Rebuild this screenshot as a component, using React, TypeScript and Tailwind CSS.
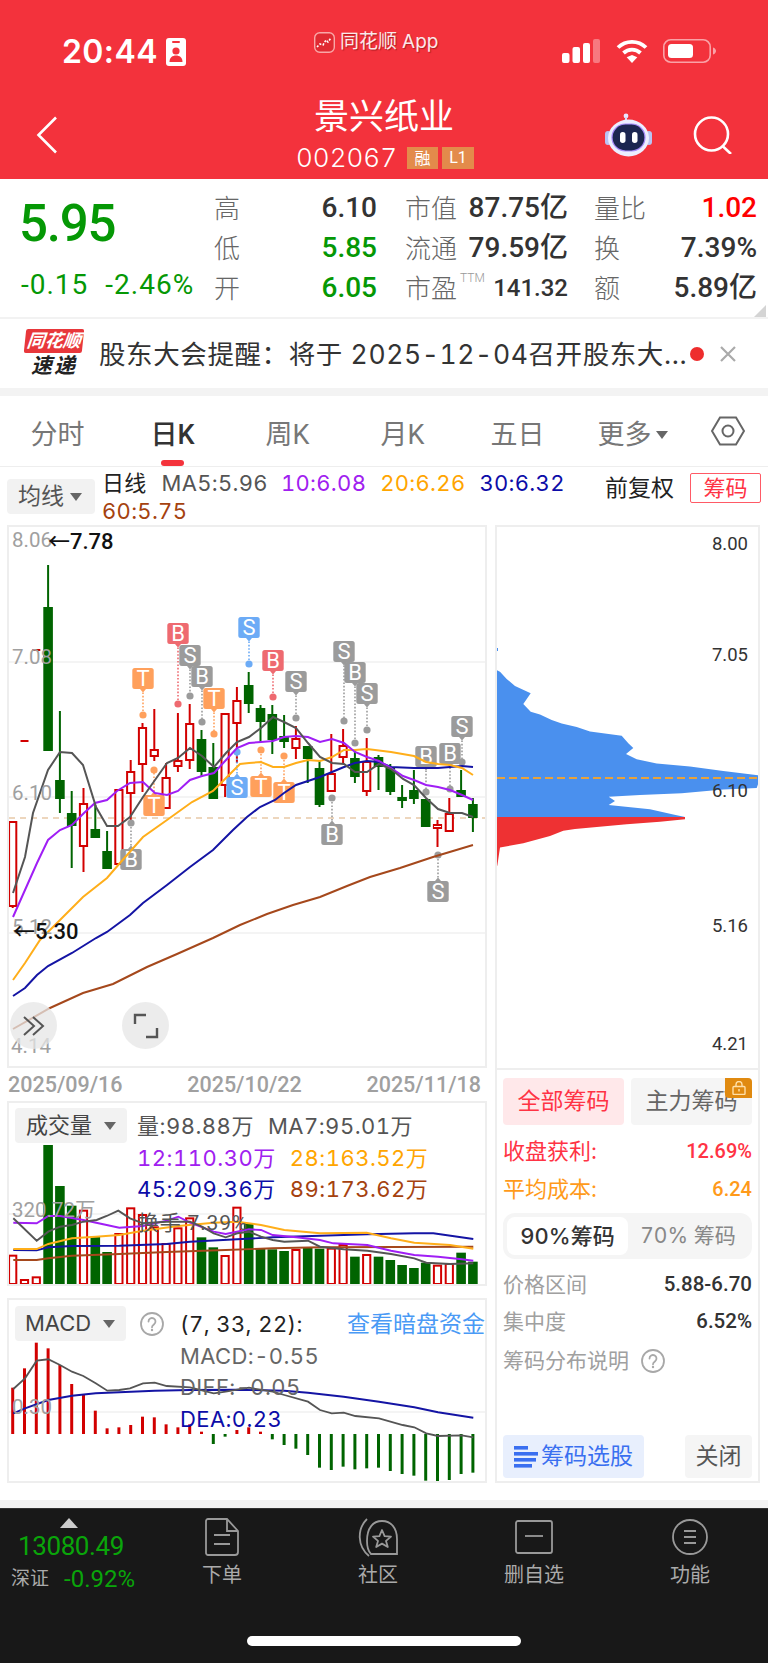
import React from "react";

const NUM = "font-['Roboto','Noto_Sans_CJK_SC',sans-serif]";
const CJK = "font-['Inter','Noto_Sans_CJK_SC',sans-serif] tabular-nums";
const CHART_FONT = "Roboto, 'Noto Sans CJK SC', 'DejaVu Sans', sans-serif";

const RED = "#d20000";
const GREEN = "#006400";

// Daily candles: [high, bodyTop, bodyBottom, low, rising]
type Candle = [number, number, number, number, boolean];
const candles: Candle[] = [
  [822, 822, 906, 908, true],
  [741, 741, 741, 741, true],
  [650, 650, 650, 650, true],
  [565, 607, 751, 751, false],
  [711, 780, 799, 813, false],
  [791, 813, 826, 868, false],
  [788, 804, 846, 872, true],
  [805, 829, 838, 838, false],
  [831, 851, 869, 869, false],
  [790, 790, 864, 864, true],
  [760, 772, 793, 820, true],
  [723, 728, 764, 792, true],
  [709, 750, 756, 761, true],
  [763, 778, 808, 809, true],
  [713, 761, 766, 772, true],
  [704, 724, 760, 769, true],
  [730, 739, 772, 777, false],
  [743, 767, 799, 799, false],
  [714, 714, 785, 797, true],
  [687, 701, 723, 763, true],
  [672, 685, 704, 713, false],
  [705, 708, 722, 742, false],
  [705, 714, 740, 754, false],
  [715, 736, 742, 748, false],
  [726, 739, 748, 759, true],
  [746, 746, 759, 783, false],
  [761, 768, 805, 807, false],
  [734, 774, 791, 791, true],
  [729, 746, 757, 764, true],
  [750, 758, 777, 783, false],
  [738, 762, 791, 796, true],
  [755, 757, 767, 790, false],
  [764, 768, 792, 795, false],
  [785, 797, 801, 808, false],
  [770, 790, 799, 804, false],
  [799, 799, 827, 827, false],
  [820, 825, 828, 847, true],
  [798, 814, 831, 831, true],
  [770, 790, 797, 797, false],
  [798, 804, 818, 832, false],
];
const cx = (i: number) => 12.7 + 11.8 * i;

const ma5 = "13,893 25,857 33,813 48,770 60,752 72,753 83,765 96,807 107,826 118,826 130,817 143,797 155,780 167,763 178,758 190,748 202,756 214,767 226,753 237,742 249,737 261,728 273,717 284,722 296,728 308,743 320,757 332,763 344,764 355,772 367,772 379,764 391,769 403,779 414,785 426,798 438,809 450,813 462,813 473,817";
const ma10 = "13,917 37,863 48,840 60,830 72,825 84,813 95,803 107,800 117,791 130,783 143,782 155,793 167,795 178,791 190,780 202,776 214,773 226,760 237,748 249,743 261,742 273,741 284,737 296,736 308,737 320,742 332,739 344,743 355,752 367,757 379,761 391,768 403,776 414,780 426,785 438,787 450,790 462,795 473,800";
const ma20 = "13,980 25,963 40,940 60,920 83,897 107,878 120,863 143,837 167,820 192,802 213,791 227,777 240,764 249,763 261,762 273,767 284,767 296,763 308,760 320,761 332,757 344,750 355,750 367,749 391,752 414,756 426,762 438,764 450,765 462,768 473,775";
const ma30 = "13,996 25,988 37,975 48,966 72,953 96,938 107,932 130,915 143,903 167,885 190,867 213,850 233,830 247,817 260,807 275,800 284,793 296,785 320,777 344,767 355,763 367,761 379,762 391,767 414,768 438,768 450,767 462,766 473,767";
const ma60 = "13,1029 50,1008 83,993 113,984 147,967 177,954 213,938 240,925 267,914 293,905 320,897 347,886 370,877 400,868 433,857 473,845";

// Trade signals: [letter, colour, box top, x, dot y]
const GY = "#9b9b9b";
const RD = "#ee6a70";
const OR = "#ffa05c";
const BL = "#6cabf6";
const signals: [string, string, number, number, number][] = [
  ["T", OR, 668, 143, 715],
  ["B", RD, 623, 178, 704],
  ["S", GY, 645, 190, 696],
  ["B", GY, 666, 202, 722],
  ["T", OR, 688, 214, 734],
  ["S", BL, 617, 249, 664],
  ["B", RD, 650, 273, 697],
  ["S", GY, 671, 296, 718],
  ["S", GY, 641, 344, 721],
  ["B", GY, 662, 355, 743],
  ["S", GY, 683, 367, 730],
  ["S", GY, 716, 462, 762],
  ["B", GY, 743, 450, 789],
  ["B", GY, 746, 426, 792],
  ["S", BL, 777, 237, 752],
  ["T", OR, 776, 261, 750],
  ["T", OR, 782, 284, 756],
  ["T", OR, 795, 154, 770],
  ["B", GY, 849, 131, 823],
  ["B", GY, 824, 332, 798],
  ["S", GY, 881, 438, 855],
];

// Volume tops and MACD bar ends, measured from a common baseline per pane
const volTops = [497, 570, 562, 165, 288, 347, 362, 440, 486, 432, 355, 375, 412, 462, 415, 385, 442, 472, 498, 353, 400, 475, 478, 483, 480, 472, 476, 476, 465, 500, 495, 500, 510, 525, 534, 518, 527, 522, 488, 515];
const volY = (v: number) => 1090 + v / 3;
const macdEnds = [293, 235, 158, 175, 225, 282, 315, 362, 415, 412, 405, 380, 382, 403, 412, 403, 425, 462, 440, 420, 412, 425, 448, 465, 476, 495, 533, 540, 530, 538, 535, 533, 543, 552, 557, 572, 578, 570, 552, 548];
const macdY = (v: number) => 1290 + v / 3;

const toPts = (raw: number[][], fx: (x: number) => number, fy: (y: number) => number) =>
  raw.map(([x, y]) => `${fx(x).toFixed(1)},${fy(y).toFixed(1)}`).join(" ");
const third = (x: number) => x / 3;

const volMa7 = toPts([[40,385],[110,452],[145,425],[180,410],[216,405],[250,395],[290,390],[320,378],[355,362],[390,385],[429,400],[500,395],[570,395],[606,410],[641,430],[677,442],[712,430],[747,425],[783,440],[818,450],[853,455],[924,452],[960,470],[1031,478],[1102,482],[1173,492],[1243,505],[1279,518],[1350,522],[1420,520]], third, volY);
const volMa12 = toPts([[40,398],[110,400],[145,378],[180,378],[250,390],[320,405],[358,413],[429,408],[500,392],[535,380],[570,398],[641,425],[677,432],[747,418],[783,420],[818,435],[889,442],[960,450],[1000,460],[1102,465],[1173,482],[1243,495],[1314,500],[1385,508],[1420,512]], third, volY);
const volMa28 = toPts([[40,477],[110,477],[145,462],[216,445],[287,440],[358,435],[429,422],[535,408],[641,398],[712,395],[783,405],[853,420],[960,430],[1100,428],[1173,445],[1243,458],[1350,465],[1420,476]], third, volY);
const volMa45 = toPts([[40,480],[110,481],[145,472],[216,468],[358,467],[500,462],[570,455],[712,448],[818,442],[960,437],[1102,433],[1243,430],[1300,430],[1420,447]], third, volY);
const volMa89 = toPts([[40,510],[110,510],[145,505],[216,497],[358,492],[500,486],[677,480],[818,475],[960,472],[1420,470]], third, volY);

const diffLine = toPts([[40,297],[75,265],[110,212],[145,208],[180,225],[216,245],[250,258],[287,280],[322,302],[358,300],[390,295],[429,280],[464,278],[500,288],[570,292],[641,310],[677,305],[747,293],[818,305],[853,315],[924,335],[960,360],[995,370],[1031,368],[1066,378],[1137,385],[1208,405],[1243,412],[1279,430],[1314,438],[1385,436],[1420,442]], third, macdY);
const deaLine = toPts([[40,370],[75,355],[145,330],[216,317],[287,310],[358,307],[464,302],[570,300],[712,299],[853,302],[924,308],[1031,320],[1137,335],[1243,352],[1314,367],[1420,383]], third, macdY);

// Chip distribution outline
const chipX = (x: number) => 490 + x / 3;
const chipY = (y: number) => 520 + y / 2.8;
const chipBlue = toPts([[20,420],[30,425],[50,445],[75,465],[122,485],[100,515],[122,537],[150,545],[185,560],[215,570],[260,580],[300,592],[395,604],[415,625],[430,638],[408,655],[440,670],[500,682],[600,690],[700,703],[808,715],[808,730],[800,750],[700,755],[575,765],[450,770],[356,775],[375,787],[356,798],[480,810],[550,825],[585,832],[20,832]], chipX, chipY);
const chipRed = toPts([[20,832],[585,832],[585,838],[510,845],[410,852],[255,865],[220,870],[180,885],[100,905],[30,917],[22,968],[18,968]], chipX, chipY);

function Caret({ className = "" }: { className?: string }) {
  return (
    <svg width="12" height="8" viewBox="0 0 12 8" className={className}>
      <polygon points="0,0 12,0 6,8" fill="#666" />
    </svg>
  );
}

function Help() {
  return (
    <svg width="24" height="24" viewBox="0 0 24 24" fill="none">
      <circle cx="12" cy="12" r="11" stroke="#a8a8a8" strokeWidth="1.8" />
      <path d="M8.5 9.5a3.5 3.5 0 1 1 5.6 2.8c-1.3 1-2.1 1.5-2.1 3" stroke="#a8a8a8" strokeWidth="1.8" strokeLinecap="round" />
      <circle cx="12" cy="18" r="1.2" fill="#a8a8a8" />
    </svg>
  );
}

function StatusBar() {
  return (
    <div className="h-[90px] pt-[12px] flex items-center relative">
      <div className="w-[314px] pl-[62px] mt-[2px] flex items-center gap-[8px]">
        <span className="font-['Inter',sans-serif] text-[32px] font-semibold text-white leading-none tracking-[0.4px]">20:44</span>
        <svg width="20" height="28" viewBox="0 0 20 28">
          <rect width="20" height="28" rx="3" fill="#fff" />
          <rect x="6" y="3" width="8" height="2" rx="1" fill="#f3323c" />
          <circle cx="10" cy="13" r="3.6" fill="#f3323c" />
          <path d="M3.5 24c0-4.5 3-6.5 6.5-6.5s6.5 2 6.5 6.5z" fill="#f3323c" />
        </svg>
      </div>
      <div className="w-[248px] flex items-center gap-[5px] -mt-[18px]">
        <svg width="21" height="21" viewBox="0 0 21 21">
          <rect x="0.7" y="0.7" width="19.6" height="19.6" rx="5" fill="#e02a32" stroke="#f9a7a7" strokeWidth="1.4" />
          <path d="M3 15l3-3 3 1 3-5 2 2 3-4" stroke="#fff" strokeWidth="1.6" fill="none" strokeDasharray="2 1.6" />
        </svg>
        <span className={`${CJK} text-[19px] text-white/90 [text-shadow:1px_1px_1px_rgba(90,0,0,0.45)]`}>同花顺 App</span>
      </div>
      <div className="flex items-center">
        <svg width="38" height="24" viewBox="0 0 38 24" className="mr-[16px]">
          <rect x="0" y="14" width="7.5" height="10" rx="2" fill="#fff" />
          <rect x="10.5" y="8" width="7.5" height="16" rx="2" fill="#fff" />
          <rect x="21" y="4" width="7" height="20" rx="2" fill="#fff" />
          <rect x="31" y="0" width="7" height="24" rx="2" fill="#ffffff" fillOpacity="0.35" />
        </svg>
        <svg width="32" height="24" viewBox="0 0 32 24" fill="none" className="mr-[15px]">
          <path d="M2 8.5a20 20 0 0 1 28 0" stroke="#fff" strokeWidth="3.8" />
          <path d="M7.5 14a12.4 12.4 0 0 1 17 0" stroke="#fff" strokeWidth="3.8" />
          <polygon points="16,24 10.7,18.2 16,16 21.3,18.2" fill="#fff" />
        </svg>
        <svg width="54" height="24" viewBox="0 0 54 24" fill="none">
          <rect x="0.8" y="0.8" width="46.4" height="22.4" rx="7" stroke="#ffffff" strokeOpacity="0.55" strokeWidth="1.6" />
          <rect x="5" y="5" width="25" height="14" rx="3.5" fill="#fff" />
          <path d="M50 8.5c2 .6 3 2 3 3.5s-1 2.9-3 3.5z" fill="#ffffff" fillOpacity="0.55" />
        </svg>
      </div>
    </div>
  );
}

function TitleBar() {
  return (
    <div className="h-[89px] grid grid-cols-[1fr_auto_1fr] items-center">
      <div className="pl-[36px]">
        <svg width="22" height="38" viewBox="0 0 22 38" fill="none">
          <path d="M20 1.5 2.5 19 20 36.5" stroke="#fff" strokeWidth="2.6" />
        </svg>
      </div>
      <div className="flex flex-col items-center -mt-[1px]">
        <div className={`${CJK} text-[35px] leading-[40px] text-white`}>景兴纸业</div>
        <div className="flex items-center mt-[7px] pl-[2px]">
          <span className={`${CJK} text-[26px] leading-[30px] text-white font-light`}>002067</span>
          <span className={`${CJK} ml-[10px] w-[31px] h-[22px] bg-[#e38b4b] text-white text-[16px] leading-[22px] text-center`}>融</span>
          <span className={`${NUM} ml-[4px] w-[32px] h-[22px] bg-[#e38b4b] text-white text-[16px] leading-[22px] text-center`}>L1</span>
        </div>
      </div>
      <div className="flex items-center justify-end pr-[35px] gap-[41px]">
        <svg width="47" height="44" viewBox="0 0 47 44" fill="none">
          <circle cx="21" cy="3" r="2.4" fill="#e9e6ff" />
          <path d="M21 4v6" stroke="#d8d6f5" strokeWidth="2" />
          <rect x="0" y="18" width="6" height="14" rx="3" fill="#b9c3f3" />
          <rect x="41" y="18" width="6" height="14" rx="3" fill="#b9c3f3" />
          <ellipse cx="23.5" cy="25" rx="20.5" ry="18.5" fill="#eceeff" />
          <rect x="7" y="11" width="33" height="27" rx="13.5" fill="#1c2650" stroke="#a78bfa" strokeWidth="1.2" />
          <rect x="15" y="19" width="5.5" height="11" rx="2.7" fill="#fff" />
          <rect x="27" y="19" width="5.5" height="11" rx="2.7" fill="#fff" />
        </svg>
        <svg width="40" height="38" viewBox="0 0 40 38" fill="none">
          <circle cx="18.5" cy="18" r="16.5" stroke="#fff" strokeWidth="2.6" />
          <path d="M29.5 30 38 38" stroke="#fff" strokeWidth="2.6" />
        </svg>
      </div>
    </div>
  );
}

function Stat({ label, value, color = "text-[#333]", size = "text-[28px]" }: { label: React.ReactNode; value: string; color?: string; size?: string }) {
  return (
    <div className="w-[163px] h-[40px] flex items-center justify-between">
      <div className={`${CJK} text-[26px] leading-[32px] mt-[2px] font-light text-[#666] flex`}>{label}</div>
      <span className={`${NUM} ${size} ${color} leading-[40px] font-medium`}>{value}</span>
    </div>
  );
}

function Quote() {
  return (
    <div className="h-[138px] flex relative">
      <div className="w-[214px] pl-[19px] pt-[17px] shrink-0">
        <div className={`${NUM} text-[51px] leading-[56px] font-medium text-[#059805] tracking-[-1.2px]`}>5.95</div>
        <div className={`${NUM} text-[28px] leading-[30px] text-[#059805] mt-[18px] ml-[2px] flex gap-[17px] tracking-[1px]`}>
          <span>-0.15</span>
          <span>-2.46%</span>
        </div>
      </div>
      <div className="pt-[9px] flex gap-[28px]">
        <div className="flex flex-col">
          <Stat label="高" value="6.10" />
          <Stat label="低" value="5.85" color="text-[#059805]" />
          <Stat label="开" value="6.05" color="text-[#059805]" />
        </div>
        <div className="flex flex-col">
          <Stat label="市值" value="87.75亿" />
          <Stat label="流通" value="79.59亿" />
          <Stat
            label={
              <>
                市盈
                <span className={`${NUM} text-[12px] leading-[14px] text-[#999] ml-[3px] -mt-[2px]`}>TTM</span>
              </>
            }
            value="141.32"
            size="text-[24px]"
          />
        </div>
      </div>
      <div className="pt-[9px] pl-[26px] flex flex-col">
        <Stat label="量比" value="1.02" color="text-[#ff0000]" />
        <Stat label="换" value="7.39%" />
        <Stat label="额" value="5.89亿" />
      </div>
      <svg width="12" height="12" viewBox="0 0 12 12" className="absolute right-[2px] bottom-0">
        <polygon points="12,0 12,12 0,12" fill="#d4d4d4" />
      </svg>
    </div>
  );
}

function NewsBar() {
  return (
    <div className="h-[69px] border-t-[2px] border-b-[8px] box-content border-t-[#f2f2f2] border-b-[#f3f3f3] flex items-center pl-[25px] relative">
      <div className="w-[58px] flex flex-col items-center shrink-0">
        <div className={`${CJK} w-[58px] h-[24px] bg-[#e8373b] text-white text-[18px] leading-[24px] font-bold italic text-center -skew-x-6 rounded-[2px]`}>同花顺</div>
        <div className={`${CJK} text-[21px] leading-[25px] font-bold italic text-[#222] tracking-[2px]`}>速递</div>
      </div>
      <div className={`${CJK} ml-[16px] text-[26.5px] leading-[36px] text-[#333] tracking-[0.6px] w-[589px] whitespace-nowrap`}>
        股东大会提醒：将于 2025-12-04召开股东大...
      </div>
      <span className="w-[14px] h-[14px] rounded-full bg-[#ee2d2d] ml-[2px]" />
      <svg width="18" height="18" viewBox="0 0 18 18" className="ml-[15px]">
        <path d="M2 2 16 16M16 2 2 16" stroke="#aaa" strokeWidth="2.2" />
      </svg>
    </div>
  );
}

function Tabs() {
  const items = ["分时", "日K", "周K", "月K", "五日"];
  return (
    <div className="h-[71px] flex items-center border-b-[1px] border-[#eeeeee]">
      <div className="grid grid-cols-[repeat(6,115px)] h-full">
        {items.map((t) => (
          <div key={t} className="relative flex items-center justify-center pt-[7px]">
            <span className={`${NUM} text-[27px] leading-[36px] ${t === "日K" ? "text-[#333] font-medium" : "text-[#777]"}`}>{t}</span>
            {t === "日K" && <span className="absolute bottom-0 left-[46px] w-[23px] h-[6px] rounded-[3px] bg-[#f4333c]" />}
          </div>
        ))}
        <div className="flex items-center justify-center gap-[4px] pt-[7px]">
          <span className={`${NUM} text-[27px] leading-[36px] text-[#777]`}>更多</span>
          <Caret />
        </div>
      </div>
      <svg width="34" height="30" viewBox="0 0 34 30" fill="none" className="ml-[21px]">
        <polygon points="9,1.5 25,1.5 33,15 25,28.5 9,28.5 1,15" stroke="#666" strokeWidth="2" />
        <circle cx="17" cy="15" r="5.5" stroke="#666" strokeWidth="2" />
      </svg>
    </div>
  );
}

function MaLegend() {
  return (
    <div className="h-[58px] flex relative">
      <div className="ml-[7px] mt-[12px] w-[88px] h-[35px] bg-[#f2f2f2] rounded-[4px] flex items-center pl-[11px] gap-[6px]">
        <span className={`${CJK} text-[23px] leading-[35px] text-[#555]`}>均线</span>
        <Caret />
      </div>
      <div className={`${CJK} ml-[7px] pt-[3px] w-[503px] text-[22px] leading-[27px] tracking-[0.3px] flex flex-wrap`}>
        <span className="text-[#222] mr-[15px]">日线</span>
        <span className="text-[#555] mr-[13px]">MA5:5.96</span>
        <span className="text-[#a020f0] mr-[14px]">10:6.08</span>
        <span className="text-[#ffa500] mr-[14px]">20:6.26</span>
        <span className="text-[#0c0ca8]">30:6.32</span>
        <span className="text-[#a5420f]">60:5.75</span>
      </div>
      <div className="flex items-start pt-[6px]">
        <span className={`${CJK} text-[23px] leading-[30px] text-[#222] w-[85px] shrink-0`}>前复权</span>
        <span className={`${CJK} w-[71px] h-[30px] border-[1px] border-[#ff5a66] rounded-[2px] text-[#ff3344] text-[22px] leading-[28px] text-center shrink-0`}>筹码</span>
      </div>
    </div>
  );
}

function CandleChart() {
  return (
    <svg width="476" height="539" viewBox="9 527 476 539" className="block">
      <line x1="9" x2="485" y1="662" y2="662" stroke="#f0f0f0" strokeWidth="1.5" />
      <line x1="9" x2="485" y1="797" y2="797" stroke="#f0f0f0" strokeWidth="1.5" />
      <line x1="9" x2="485" y1="933" y2="933" stroke="#f0f0f0" strokeWidth="1.5" />
      <line x1="9" x2="485" y1="818" y2="818" stroke="#e8c9a8" strokeWidth="1.5" strokeDasharray="6 5" />

      {candles.map(([hi, top, bot, lo, up], i) => {
        const x = cx(i);
        const c = up ? RED : GREEN;
        if (hi === lo) return <line key={i} x1={x - 4} x2={x + 4} y1={hi} y2={hi} stroke={RED} strokeWidth="2" />;
        return (
          <g key={i}>
            <line x1={x} x2={x} y1={hi} y2={top} stroke={c} strokeWidth="2" />
            <line x1={x} x2={x} y1={bot} y2={lo} stroke={c} strokeWidth="2" />
            {up ? (
              <rect x={x - 3.6} y={top} width="7.2" height={bot - top} fill="#fff" stroke={c} strokeWidth="2" />
            ) : (
              <rect x={x - 4.8} y={top} width="9.6" height={bot - top} fill={c} />
            )}
          </g>
        );
      })}

      {signals.map(([letter, color, boxTop, x, dotY], i) => {
        const above = dotY > boxTop;
        const boxEnd = above ? boxTop + 21 : boxTop;
        return (
          <g key={i}>
            <line x1={x} x2={x} y1={boxEnd} y2={dotY} stroke={color} strokeWidth="1.6" strokeDasharray="1.6 1.8" />
            <circle cx={x} cy={dotY} r="3.6" fill={color} />
            <rect x={x - 10.7} y={boxTop} width="21.4" height="21" rx="2.5" fill={color} />
            <polygon
              points={above ? `${x - 3},${boxEnd} ${x + 3},${boxEnd} ${x},${boxEnd + 3.5}` : `${x - 3},${boxEnd} ${x + 3},${boxEnd} ${x},${boxEnd - 3.5}`}
              fill={color}
            />
            <text x={x} y={boxTop + 18} fontSize="22" fill="#fff" textAnchor="middle" fontFamily={CHART_FONT}>
              {letter}
            </text>
          </g>
        );
      })}

      <polyline points={ma60} fill="none" stroke="#a5481c" strokeWidth="2" />
      <polyline points={ma30} fill="none" stroke="#1414a4" strokeWidth="2" />
      <polyline points={ma20} fill="none" stroke="#ffae1a" strokeWidth="2" />
      <polyline points={ma10} fill="none" stroke="#a01ef5" strokeWidth="2" />
      <polyline points={ma5} fill="none" stroke="#555" strokeWidth="2" />

      <g fontSize="20.5" fill="#a0a0a0" fontFamily={CHART_FONT}>
        <text x="12" y="547">8.06</text>
        <text x="12" y="664">7.08</text>
        <text x="12" y="800">6.10</text>
        <text x="12" y="934">5.12</text>
        <text x="11" y="1053">4.14</text>
      </g>
      <g fontSize="22" fill="#111" fontWeight="500" fontFamily={CHART_FONT}>
        <text x="48" y="549">←7.78</text>
        <text x="13" y="939">←5.30</text>
      </g>
    </svg>
  );
}

function VolumePane() {
  return (
    <div className="relative w-[480px] h-[185px] border-2 border-[#eeeeee] overflow-hidden">
      <svg width="476" height="181" viewBox="9 1103 476 181" className="absolute inset-0 block">
        <line x1="9" x2="485" y1="1214" y2="1214" stroke="#f0f0f0" strokeWidth="1.5" />
        {volTops.map((t, i) => {
          const x = cx(i);
          const y = volY(t);
          const up = candles[i][4];
          return up ? (
            <rect key={i} x={x - 3.6} y={y} width="7.2" height={1284 - y} fill="#fff" stroke={RED} strokeWidth="2" />
          ) : (
            <rect key={i} x={x - 4.8} y={y} width="9.6" height={1285 - y} fill={GREEN} />
          );
        })}
        <polyline points={volMa89} fill="none" stroke="#a5481c" strokeWidth="1.9" />
        <polyline points={volMa45} fill="none" stroke="#1414a4" strokeWidth="1.9" />
        <polyline points={volMa28} fill="none" stroke="#ffae1a" strokeWidth="1.9" />
        <polyline points={volMa12} fill="none" stroke="#a01ef5" strokeWidth="1.9" />
        <polyline points={volMa7} fill="none" stroke="#555" strokeWidth="1.9" />
        <text x="12" y="1217" fontSize="20.5" fill="#a0a0a0" fontFamily={CHART_FONT}>320.72万</text>
        <text x="138" y="1230" fontSize="21" fill="#555" letterSpacing="0.8" fontFamily={CHART_FONT}>换手 7.39%</text>
      </svg>
      <div className="relative flex">
        <div className="ml-[6px] mt-[5px] w-[112px] h-[35px] bg-[#f2f2f2] rounded-[4px] flex items-center pl-[11px] gap-[12px]">
          <span className={`${CJK} text-[22px] leading-[35px] text-[#444]`}>成交量</span>
          <Caret />
        </div>
        <div className={`${CJK} ml-[10px] pt-[8px] text-[22px] leading-[31.5px] tracking-[0.5px] whitespace-nowrap`}>
          <div className="flex gap-[14px] text-[#555]">
            <span>量:98.88万</span>
            <span>MA7:95.01万</span>
          </div>
          <div className="flex gap-[14px]">
            <span className="text-[#a020f0]">12:110.30万</span>
            <span className="text-[#ffa500]">28:163.52万</span>
          </div>
          <div className="flex gap-[14px]">
            <span className="text-[#0c0ca8]">45:209.36万</span>
            <span className="text-[#a5420f]">89:173.62万</span>
          </div>
        </div>
      </div>
    </div>
  );
}

function MacdPane() {
  return (
    <div className="relative w-[480px] h-[185px] border-2 border-[#eeeeee] overflow-hidden mt-[12px]">
      <svg width="476" height="181" viewBox="9 1300 476 181" className="absolute inset-0 block">
        <line x1="9" x2="485" y1="1412" y2="1412" stroke="#f0f0f0" strokeWidth="1.5" />
        {macdEnds.map((e, i) => {
          const x = cx(i);
          const down = e > 432 || i === 17 || i === 18;
          return (
            <line key={i} x1={x} x2={x} y1={macdY(432)} y2={macdY(e)} stroke={down ? GREEN : RED} strokeWidth="3" />
          );
        })}
        <polyline points={deaLine} fill="none" stroke="#1414a4" strokeWidth="1.9" />
        <polyline points={diffLine} fill="none" stroke="#555" strokeWidth="1.8" />
        <text x="12" y="1414" fontSize="20.5" fill="#a0a0a0" fontFamily={CHART_FONT}>0.30</text>
      </svg>
      <div className="relative flex">
        <div className="ml-[6px] mt-[6px] h-[35px] w-[111px] bg-[#f2f2f2] rounded-[4px] flex items-center pl-[10px] gap-[12px] shrink-0">
          <span className={`${CJK} text-[22px] leading-[35px] text-[#444]`}>MACD</span>
          <Caret />
        </div>
        <div className="ml-[14px] mt-[12px] w-[40px] shrink-0">
          <Help />
        </div>
        <div className={`${CJK} pt-[9px] w-[305px] text-[22px] leading-[31.5px] tracking-[0.4px] whitespace-nowrap`}>
          <div className="flex justify-between">
            <span className="text-[#222]">(7, 33, 22):</span>
            <span className="text-[#4a9af5] text-[23px] tracking-normal">查看暗盘资金</span>
          </div>
          <div className="text-[#666]">MACD:-0.55</div>
          <div className="text-[#666]">DIFF:-0.05</div>
          <div className="text-[#0c0ca8]">DEA:0.23</div>
        </div>
      </div>
    </div>
  );
}

function ChartColumn() {
  return (
    <div className="w-[480px] shrink-0 flex flex-col">
      <div className="relative w-[480px] h-[543px] border-2 border-[#eeeeee] overflow-hidden">
        <CandleChart />
        <div className="absolute left-[1px] top-[475px] w-[47px] h-[47px] rounded-full bg-[#e6e6e6]/75 flex items-center justify-center">
          <svg width="24" height="24" viewBox="0 0 24 24" fill="none" stroke="#555" strokeWidth="2">
            <path d="M2 3l10 9-10 9M11 3l10 9-10 9" />
          </svg>
        </div>
        <div className="absolute left-[113px] top-[475px] w-[47px] h-[47px] rounded-full bg-[#e6e6e6]/75 flex items-center justify-center">
          <svg width="26" height="26" viewBox="0 0 26 26" fill="none" stroke="#555" strokeWidth="2.4">
            <path d="M13 2H2v9M13 24h11v-9" />
          </svg>
        </div>
      </div>
      <div className={`${NUM} h-[33px] flex items-center justify-between pl-[1px] pr-[6px] text-[21.5px] leading-[33px] font-medium text-[#a0a0a0]`}>
        <span>2025/09/16</span>
        <span>2025/10/22</span>
        <span>2025/11/18</span>
      </div>
      <VolumePane />
      <MacdPane />
    </div>
  );
}

function ChipPanel() {
  return (
    <div className="w-[265px] h-[958px] border-2 border-[#eeeeee] flex flex-col">
      <svg width="261" height="541" viewBox="497 527 261 541" className="block shrink-0">
        <polygon points="496,648 498,648 498,651 496,651" fill="#4a90f0" />
        <polygon points={chipBlue} fill="#4a90ee" />
        <polygon points={chipRed} fill="#ee3133" />
        <line x1="497" x2="758" y1="778" y2="778" stroke="#e8a23c" strokeWidth="1.8" strokeDasharray="8 4" />
        <g fontSize="18.5" fill="#333" textAnchor="end" fontFamily={CHART_FONT}>
          <text x="748" y="550">8.00</text>
          <text x="748" y="661">7.05</text>
          <text x="748" y="797">6.10</text>
          <text x="748" y="932">5.16</text>
          <text x="748" y="1050">4.21</text>
        </g>
      </svg>
      <div className="flex-1 border-t-2 border-[#eeeeee] px-[6px] pt-[8px] pb-[3px] flex flex-col">
        <div className="flex justify-between">
          <div className={`${CJK} w-[121px] h-[47px] rounded-[4px] bg-[#ffe8ea] text-[#ff3344] text-[23px] leading-[47px] text-center`}>全部筹码</div>
          <div className={`${CJK} relative w-[121px] h-[47px] rounded-[4px] bg-[#f5f5f5] text-[#666] text-[23px] leading-[47px] text-center`}>
            主力筹码
            <span className="absolute right-0 top-0 w-[27px] h-[20px] rounded-tr-[4px] rounded-bl-[4px] bg-[#e08a10] flex items-center justify-center">
              <svg width="14" height="14" viewBox="0 0 14 14" fill="none" stroke="#ffe0a8" strokeWidth="1.4">
                <rect x="1" y="5.5" width="12" height="8" rx="1" />
                <path d="M4 5.5V3.5a3 3 0 0 1 6 0v2" />
                <path d="M7 8v2.5" />
              </svg>
            </span>
          </div>
        </div>
        <div className={`${CJK} mt-[7px] flex justify-between text-[#ff3344] text-[22px] leading-[38px]`}>
          <span>收盘获利:</span>
          <span className={`${NUM} text-[20px] font-medium`}>12.69%</span>
        </div>
        <div className={`${CJK} flex justify-between text-[#ff9a1a] text-[22px] leading-[38px]`}>
          <span>平均成本:</span>
          <span className={`${NUM} text-[20px] font-medium`}>6.24</span>
        </div>
        <div className={`${CJK} mt-[5px] h-[46px] rounded-[12px] bg-[#f5f5f5] flex items-center px-[4px] text-[22px]`}>
          <span className="w-[121px] h-[38px] rounded-[8px] bg-white text-[#333] font-medium leading-[38px] text-center">90%筹码</span>
          <span className="flex-1 text-[21px] text-[#888] leading-[38px] text-center">70% 筹码</span>
        </div>
        <div className={`${CJK} mt-[7px] flex justify-between text-[#a0a0a0] text-[21px] leading-[37px]`}>
          <span>价格区间</span>
          <span className={`${NUM} text-[20.5px] font-medium text-[#333]`}>5.88-6.70</span>
        </div>
        <div className={`${CJK} flex justify-between text-[#a0a0a0] text-[21px] leading-[37px]`}>
          <span>集中度</span>
          <span className={`${NUM} text-[20.5px] font-medium text-[#333]`}>6.52%</span>
        </div>
        <div className={`${CJK} mt-[2px] flex items-center gap-[12px] text-[#a0a0a0] text-[21px] leading-[37px]`}>
          <span>筹码分布说明</span>
          <Help />
        </div>
        <div className="mt-auto flex justify-between">
          <div className={`${CJK} w-[141px] h-[43px] rounded-[4px] bg-[#e8effd] text-[#3a6ff0] text-[23px] leading-[43px] flex items-center justify-center gap-[3px]`}>
            <svg width="24" height="22" viewBox="0 0 24 22" fill="#3a6ff0">
              <rect x="0" y="0" width="14" height="3.6" />
              <rect x="0" y="6" width="24" height="3.6" />
              <rect x="0" y="12" width="22" height="3.6" />
              <rect x="0" y="18" width="18" height="3.6" />
            </svg>
            筹码选股
          </div>
          <div className={`${CJK} w-[67px] h-[43px] rounded-[4px] bg-[#f5f5f5] text-[#555] text-[23px] leading-[43px] text-center`}>关闭</div>
        </div>
      </div>
    </div>
  );
}

function NavItem({ label, children }: { label: string; children: React.ReactNode }) {
  return (
    <div className="flex flex-col items-center">
      <div className="h-[38px] flex items-center justify-center">{children}</div>
      <span className={`${CJK} mt-[8px] text-[20px] leading-[22px] text-[#aaaaaa]`}>{label}</span>
    </div>
  );
}

function BottomBar() {
  return (
    <div className="flex-1 bg-[#181818] border-t-[1px] border-[#333] flex flex-col">
      <div className="flex pt-[9px]">
        <div className="w-[144px] shrink-0 flex flex-col">
          <svg width="18" height="10" viewBox="0 0 18 10" className="ml-[60px]">
            <polygon points="9,0 18,10 0,10" fill="#cccccc" />
          </svg>
          <div className={`${NUM} pl-[18px] text-[26px] leading-[30px] mt-[3px] text-[#0aa50a] tracking-[-0.4px]`}>13080.49</div>
          <div className="pl-[11px] mt-[5px] flex items-center gap-[15px]">
            <span className={`${CJK} text-[19px] leading-[26px] text-[#aaaaaa]`}>深证</span>
            <span className={`${NUM} text-[24px] leading-[26px] text-[#0aa50a]`}>-0.92%</span>
          </div>
        </div>
        <div className="grid grid-cols-[repeat(4,156px)]">
          <NavItem label="下单">
            <svg width="34" height="38" viewBox="0 0 34 38" fill="none" stroke="#999" strokeWidth="1.8">
              <path d="M3 1h19l11 12v21a3 3 0 0 1-3 3H3a2 2 0 0 1-2-2V3a2 2 0 0 1 2-2z" />
              <path d="M22 1v12h11M9 17h16M9 26h16" />
            </svg>
          </NavItem>
          <NavItem label="社区">
            <svg width="40" height="39" viewBox="0 0 40 39" fill="none" stroke="#999" strokeWidth="1.8">
              <path d="M9 1C-1 11-1 28 11 38" />
              <path d="M13 36c-2-2-4-6-4-13C9 10 15 3 24 3s15 7 15 18v15z" />
              <polygon points="24,12 26.6,18.2 33,18.6 28,22.9 29.8,29 24,25.6 18.2,29 20,22.9 15,18.6 21.4,18.2" strokeLinejoin="round" />
            </svg>
          </NavItem>
          <NavItem label="删自选">
            <svg width="38" height="34" viewBox="0 0 38 34" fill="none" stroke="#999" strokeWidth="1.8">
              <rect x="1" y="1" width="36" height="32" rx="2" />
              <path d="M10 16h18" />
            </svg>
          </NavItem>
          <NavItem label="功能">
            <svg width="36" height="36" viewBox="0 0 36 36" fill="none" stroke="#999" strokeWidth="1.8">
              <circle cx="18" cy="18" r="17" />
              <path d="M12 12h12M12 18h12M12 24h12" />
            </svg>
          </NavItem>
        </div>
      </div>
      <div className="mt-auto mb-[17px] self-center w-[274px] h-[10px] rounded-full bg-white" />
    </div>
  );
}

export default function App() {
  return (
    <div className="w-[768px] h-[1663px] bg-white flex flex-col overflow-hidden">
      <header className="bg-[#f3323c] h-[179px] shrink-0">
        <StatusBar />
        <TitleBar />
      </header>
      <Quote />
      <NewsBar />
      <Tabs />
      <MaLegend />
      <main className="flex gap-[8px] pl-[7px] shrink-0">
        <ChartColumn />
        <ChipPanel />
      </main>
      <div className="h-[17px] shrink-0" />
      <div className="h-[8px] bg-[#f3f3f3] shrink-0" />
      <BottomBar />
    </div>
  );
}
